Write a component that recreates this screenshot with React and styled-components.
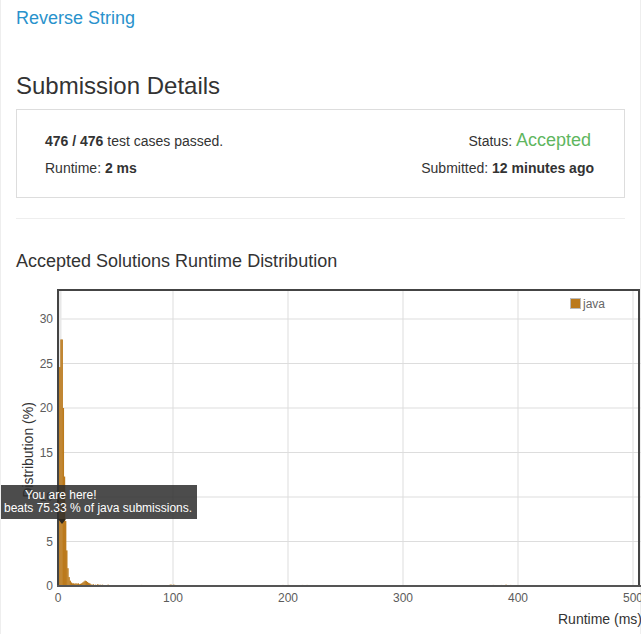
import styled, { createGlobalStyle } from 'styled-components';

const GlobalStyle = createGlobalStyle`
  body {
    margin: 0;
    background: #fff;
    color: #333;
    font-family: 'Liberation Sans', Arial, sans-serif;
    overflow: hidden;
  }
`;

const Page = styled.div`
  min-height: 634px;
  padding: 0 15px;
  border-left: 1px solid #eee;
  border-right: 1px solid #eee;
`;

const ProblemLink = styled.a`
  display: block;
  padding-top: 8px;
  font-size: 18px;
  line-height: 20px;
  color: #2992cc;
  text-decoration: none;
`;

const Heading = styled.h3`
  margin: 45px 0 10px;
  font-size: 24px;
  line-height: 26px;
  font-weight: 400;
`;

const DetailsBox = styled.div`
  border: 1px solid #ddd;
  padding: 20px 30px 19px 28px;
  font-size: 14px;
`;

const DetailRow = styled.div`
  display: flex;
  justify-content: space-between;
  align-items: baseline;
  height: 20px;
  line-height: 20px;
  & + & {
    margin-top: 8px;
  }
`;

const Bold = styled.b`
  font-weight: 700;
`;

const Status = styled.span`
  margin-right: 3px;
`;

const StatusValue = styled.span`
  font-size: 18px;
  color: #5fb65f;
`;

const Divider = styled.hr`
  margin: 20px 0 0;
  border: 0;
  border-top: 1px solid #eee;
`;

const ChartTitle = styled.h4`
  margin: 32px 0 10px;
  font-size: 18px;
  line-height: 20px;
  font-weight: 400;
`;

const ChartWrap = styled.div`
  position: relative;
  height: 360px;
`;

const Tooltip = styled.div`
  position: absolute;
  left: -15px;
  top: 204px;
  width: 190px;
  padding: 4px 3px;
  background: rgba(45, 45, 45, 0.85);
  color: #fff;
  font-size: 12px;
  line-height: 13px;
  white-space: nowrap;
  &::after {
    content: '';
    position: absolute;
    left: 57px;
    bottom: -5px;
    border-left: 4px solid transparent;
    border-right: 4px solid transparent;
    border-top: 5px solid rgba(30, 30, 30, 0.9);
  }
`;

const TipLine = styled.div`
  padding-left: ${(p) => p.indent || 0}px;
`;

const X0 = 42;
const TOP = 9;
const BOTTOM = 305;
const PX_MS = 1.15;
const PX_PCT = (BOTTOM - 38) / 30;
const BAR = '#bb7a1d';

const bins = {
  0: 24.6, 1: 24.6, 2: 27.7, 3: 27.7, 4: 20, 5: 12.3, 6: 7.3, 7: 4, 8: 2, 9: 1,
  10: 0.6, 11: 0.4, 12: 0.3, 13: 0.3, 14: 0.25, 15: 0.3, 16: 0.25, 17: 0.3, 18: 0.2,
  19: 0.25, 20: 0.3, 21: 0.4, 22: 0.5, 23: 0.6, 24: 0.55, 25: 0.45, 26: 0.35, 27: 0.3,
  28: 0.2, 30: 0.2, 32: 0.15, 34: 0.2, 36: 0.15, 38: 0.15, 40: 0.1, 43: 0.15, 46: 0.1,
  48: 0.1, 50: 0.1, 72: 0.12, 97: 0.15, 98: 0.15, 100: 0.15, 101: 0.12, 195: 0.12,
  198: 0.1, 200: 0.12, 208: 0.1, 212: 0.12, 216: 0.12, 220: 0.1, 240: 0.1, 372: 0.1,
  378: 0.12, 385: 0.12, 389: 0.15, 393: 0.12, 397: 0.1, 440: 0.1, 478: 0.1,
};

const xAt = (ms) => X0 + ms * PX_MS;
const yAt = (pct) => BOTTOM - pct * PX_PCT;

function RuntimeChart() {
  const yTicks = [0, 5, 10, 15, 20, 25, 30];
  const xTicks = [0, 100, 200, 300, 400, 500];
  return (
    <svg width="625" height="360" style={{ display: 'block', fontFamily: "'Liberation Sans', Arial, sans-serif" }}>
      {yTicks.slice(1).map((t) => (
        <line key={'h' + t} x1={X0} x2={625} y1={yAt(t)} y2={yAt(t)} stroke="#ddd" />
      ))}
      {xTicks.slice(1).map((t) => (
        <line key={'v' + t} x1={xAt(t)} x2={xAt(t)} y1={TOP} y2={BOTTOM} stroke="#ddd" />
      ))}
      <rect x={X0} y={TOP} width={3.5} height={BOTTOM - TOP} fill="#e8e8e8" />
      {Object.entries(bins).map(([ms, pct]) => (
        <rect key={ms} x={xAt(+ms)} y={yAt(pct)} width={PX_MS + 0.3} height={pct * PX_PCT} fill={BAR} />
      ))}
      <path d={`M${X0} ${BOTTOM} V${TOP} H623 V${BOTTOM}`} fill="none" stroke="#444" strokeWidth="2" />
      <line x1={X0 - 1} x2={625} y1={BOTTOM} y2={BOTTOM} stroke="#555" strokeWidth="2" />
      {yTicks.map((t) => (
        <text key={'yl' + t} x={37} y={yAt(t) + 4} textAnchor="end" fontSize="12" fill="#5c5c5c">{t}</text>
      ))}
      {xTicks.map((t) => (
        <text key={'xl' + t} x={xAt(t)} y={321} textAnchor="middle" fontSize="12" fill="#5c5c5c">{t}</text>
      ))}
      <text x={542} y={343} fontSize="14" fill="#333">Runtime (ms)</text>
      <text transform="translate(17 169) rotate(-90)" textAnchor="middle" fontSize="14" fill="#333">Distribution (%)</text>
      <rect x={554.5} y={17.5} width={10} height={10} fill={BAR} stroke="#bbb" />
      <text x={567} y={27} fontSize="12" fill="#666">java</text>
    </svg>
  );
}

export default function App() {
  return (
    <>
      <GlobalStyle />
      <Page>
        <ProblemLink href="#">Reverse String</ProblemLink>
        <Heading>Submission Details</Heading>
        <DetailsBox>
          <DetailRow>
            <span><Bold>476 / 476</Bold> test cases passed.</span>
            <Status>Status: <StatusValue>Accepted</StatusValue></Status>
          </DetailRow>
          <DetailRow>
            <span>Runtime: <Bold>2 ms</Bold></span>
            <span>Submitted: <Bold>12 minutes ago</Bold></span>
          </DetailRow>
        </DetailsBox>
        <Divider />
        <ChartTitle>Accepted Solutions Runtime Distribution</ChartTitle>
        <ChartWrap>
          <RuntimeChart />
          <Tooltip>
            <TipLine indent={21}>You are here!</TipLine>
            <TipLine>beats 75.33 % of java submissions.</TipLine>
          </Tooltip>
        </ChartWrap>
      </Page>
    </>
  );
}
